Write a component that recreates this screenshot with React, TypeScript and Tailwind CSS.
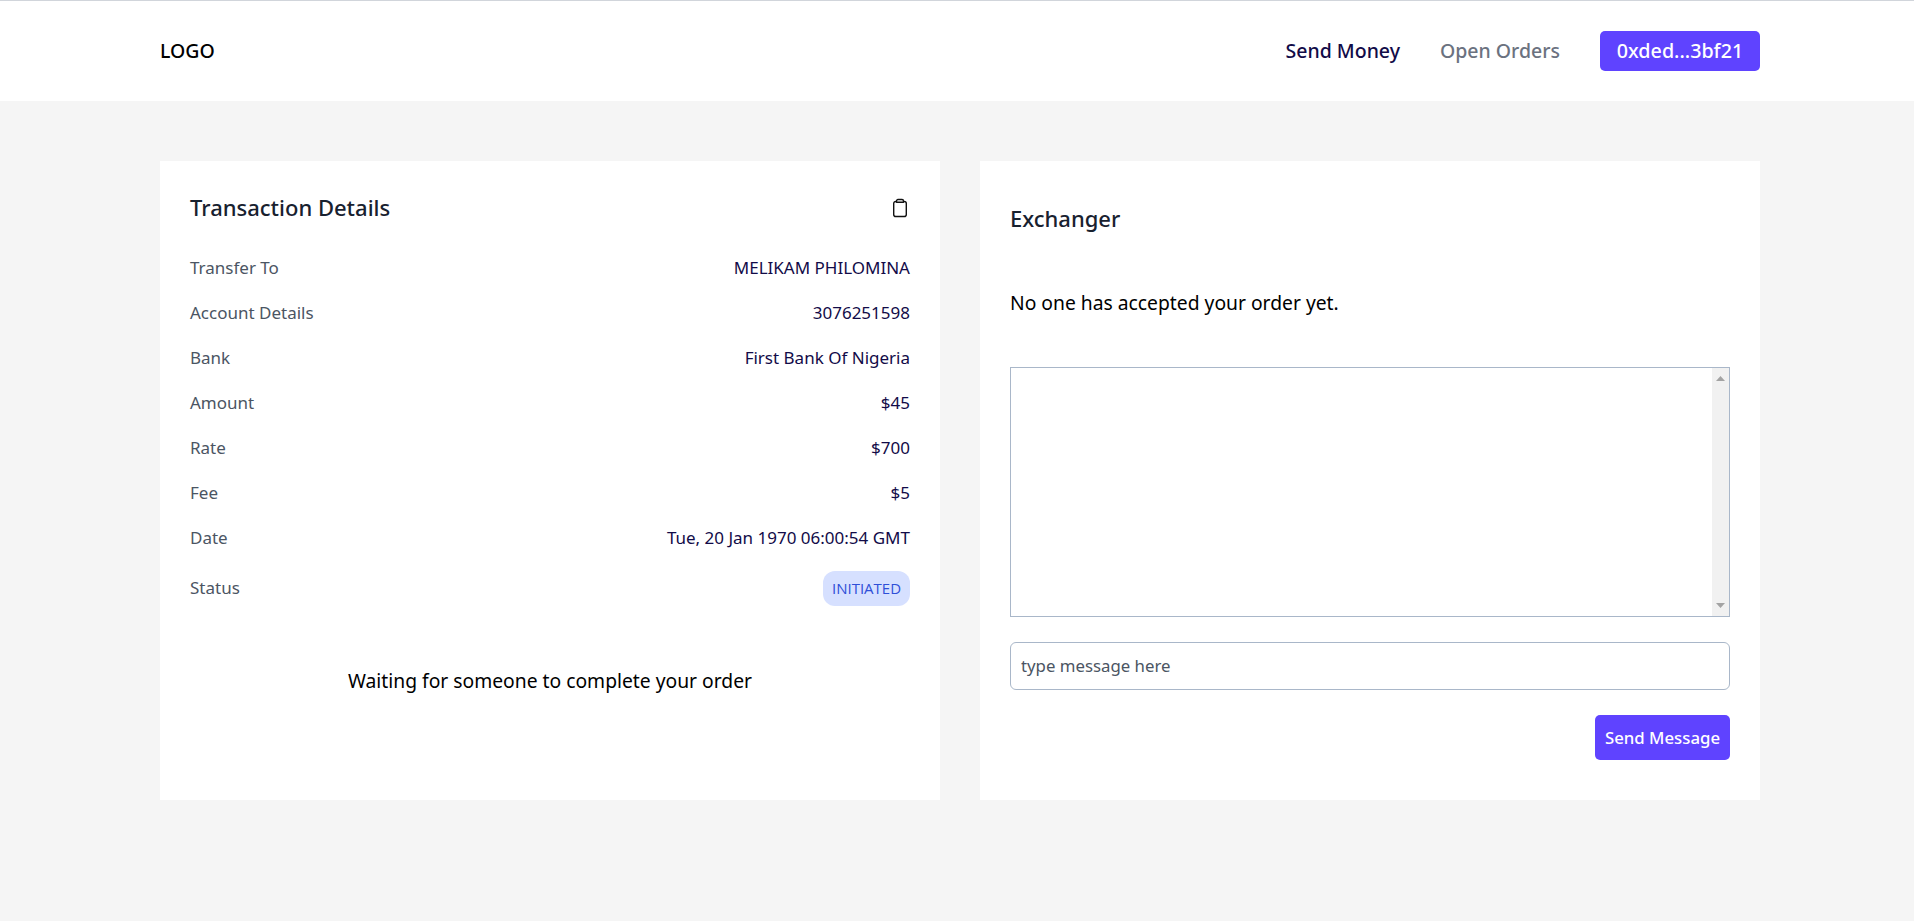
const rows = [
  { label: "Transfer To", value: "MELIKAM PHILOMINA" },
  { label: "Account Details", value: "3076251598" },
  { label: "Bank", value: "First Bank Of Nigeria" },
  { label: "Amount", value: "$45" },
  { label: "Rate", value: "$700" },
  { label: "Fee", value: "$5" },
  { label: "Date", value: "Tue, 20 Jan 1970 06:00:54 GMT" },
];

export default function App() {
  return (
    <div className="min-h-[921px] bg-[#f5f5f5] font-['Noto_Sans',sans-serif] text-[#000]">
      {/* Header */}
      <header className="h-[101px] bg-white border-t border-[#d1d5db]">
        <div className="ml-40 flex h-full w-[1600px] items-center justify-between">
          <span className="text-[19.5px] font-medium text-black">LOGO</span>
          <nav className="flex items-center gap-10">
            <a className="text-[19.5px] font-medium text-[#120b48]">Send Money</a>
            <a className="text-[19.5px] font-medium text-[#6b7280]">Open Orders</a>
            <button className="h-10 w-40 rounded-[5px] bg-[#5f43ff] text-[19.7px] font-medium text-white">
              0xded...3bf21
            </button>
          </nav>
        </div>
      </header>

      <main className="ml-40 mt-[60px] grid w-[1600px] grid-cols-2 gap-10">
        {/* Transaction details */}
        <section className="h-[639px] bg-white p-[30px]">
          <div className="flex h-[32px] items-center justify-between">
            <h2 className="text-[22px] font-medium text-[#18212f]">Transaction Details</h2>
            <svg className="mt-[1px] mr-[3px]" width="14" height="20" viewBox="0 0 14 20" fill="none" stroke="#111" strokeWidth="1.4" strokeLinejoin="round">
              <path d="M3.500 3.500H2.800C1.600 3.500.700 4.400.700 5.600v10.800c0 1.200.900 2.100 2.100 2.100h8.400c1.200 0 2.100-.900 2.100-2.100V5.600c0-1.200-.900-2.100-2.100-2.100h-.700" />
              <path d="M3.500 4.300V3c0-.8.700-1.500 1.500-1.500h4c.800 0 1.500.700 1.500 1.500v1.300z" />
            </svg>
          </div>
          <dl className="mt-[22px] flex flex-col">
            {rows.map((r) => (
              <div key={r.label} className="flex h-[45px] items-center justify-between text-[17px]">
                <dt className="text-[#4b5563]">{r.label}</dt>
                <dd className="text-[#120b48]">{r.value}</dd>
              </div>
            ))}
            <div className="mt-[11px] flex h-[35px] items-center justify-between text-[17px]">
              <dt className="mb-px text-[#4b5563]">Status</dt>
              <dd className="flex h-[35px] w-[87px] items-center justify-center rounded-[12px] bg-[#d6e0ff] font-['Open_Sans',sans-serif] text-[15px] text-[#2f4fd8]">
                INITIATED
              </dd>
            </div>
          </dl>
          <p className="mt-[61px] text-center text-[19.3px]">Waiting for someone to complete your order</p>
        </section>

        {/* Exchanger */}
        <section className="flex h-[639px] flex-col bg-white p-[30px]">
          <h2 className="mt-[11px] text-[22px] font-medium text-[#18212f]">Exchanger</h2>
          <p className="mt-[54px] text-[19.3px]">No one has accepted your order yet.</p>
          <div className="relative mt-[49px] h-[250px] w-full">
            <textarea
              readOnly
              className="block h-full w-full resize-none border border-[#a9b7c9] outline-none"
            />
            {/* native scrollbar look */}
            <div className="absolute top-px right-px bottom-px flex w-[17px] flex-col items-center justify-between bg-[#f1f1f1] py-[8px]">
              <svg width="9" height="5" viewBox="0 0 9 5"><path d="M4.500 0L9 5H0z" fill="#a3a3a3" /></svg>
              <svg width="9" height="5" viewBox="0 0 9 5"><path d="M0 0h9L4.500 5z" fill="#a3a3a3" /></svg>
            </div>
          </div>
          <input
            placeholder="type message here"
            className="mt-[25px] h-[48px] w-full rounded-[6px] border border-[#a9b7c9] px-[10px] text-[16.8px] text-[#4b5563] outline-none placeholder:text-[#4b5563]"
          />
          <div className="mt-[25px] flex justify-end">
            <button className="h-[45px] w-[135px] rounded-[5px] bg-[#5f43ff] text-[16.8px] font-medium text-white">
              Send Message
            </button>
          </div>
        </section>
      </main>
    </div>
  );
}
